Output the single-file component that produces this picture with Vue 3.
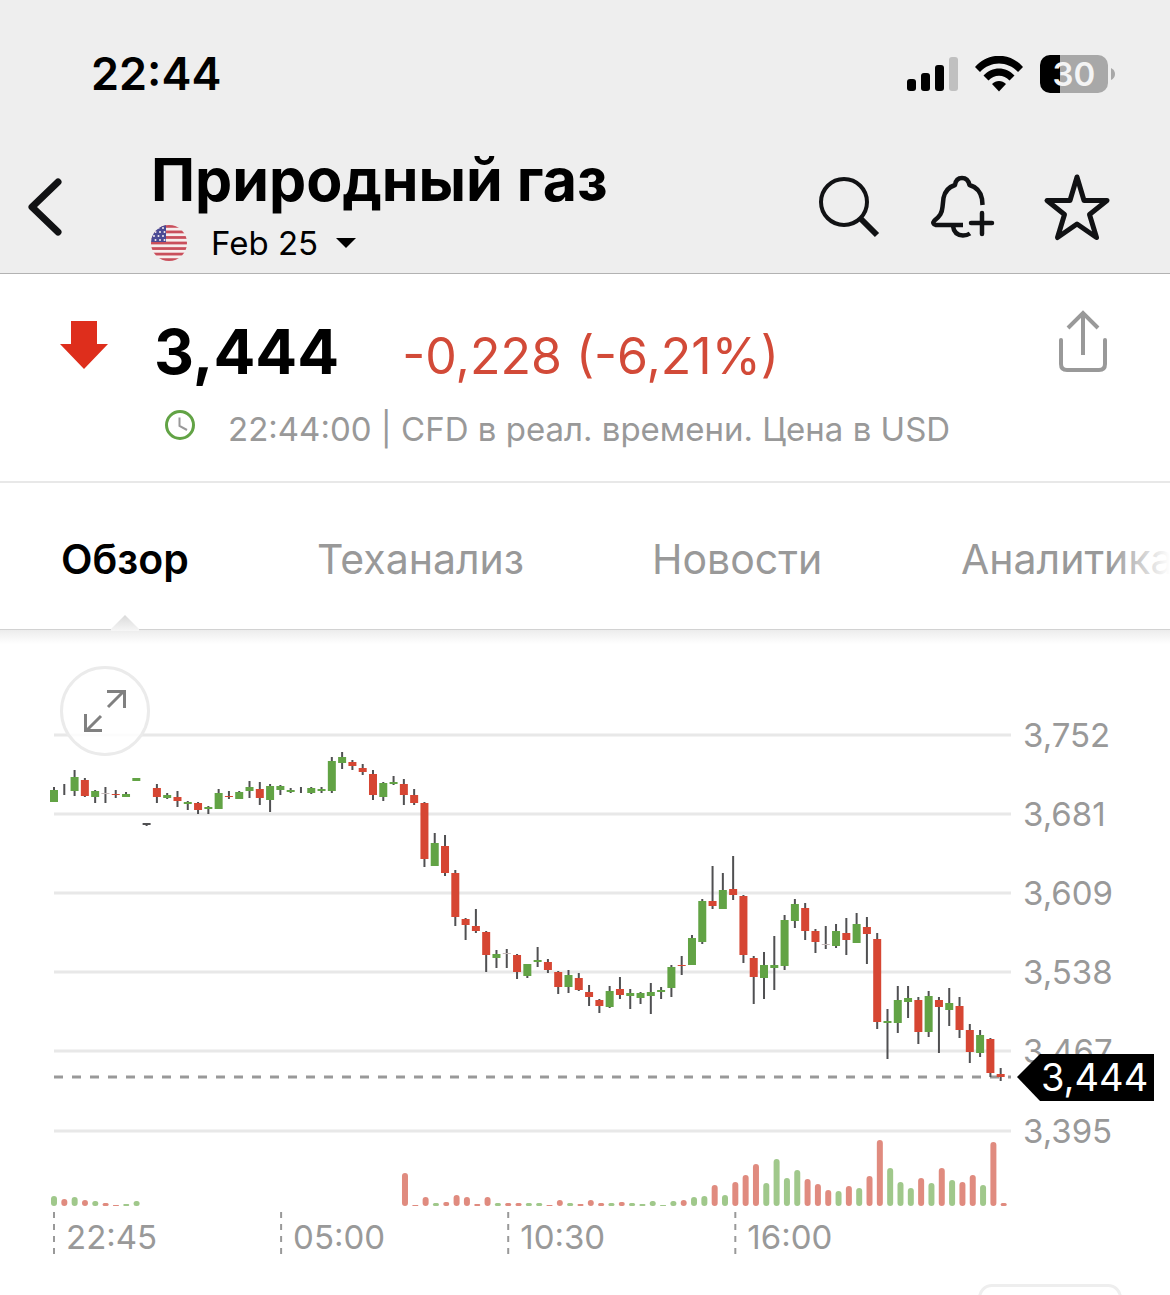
<script setup>
import { ref, computed } from 'vue';

const tabs = ['Обзор', 'Теханализ', 'Новости', 'Аналитика'];
const activeTab = ref('Обзор');

const LEFT = 54;
const RIGHT = 1011;
const CANDLE_STEP = 10.29;
const VOLUME_STEP = 10.323;
const VOLUME_BASE = 1206;

const levels = [
  { y: 735, label: '3,752' },
  { y: 814, label: '3,681' },
  { y: 893, label: '3,609' },
  { y: 972, label: '3,538' },
  { y: 1051, label: '3,467' },
  { y: 1131, label: '3,395' },
];

const times = [
  { i: 0, label: '22:45' },
  { i: 22, label: '05:00' },
  { i: 44, label: '10:30' },
  { i: 66, label: '16:00' },
];

// high, body top, body bottom, low, kind (u = up, d = down, n = flat, f = flat and faint)
const candleData = [
  [787, 790, 802, 802, 'u'], [784, 784, 784, 795, 'n'], [770, 777, 791, 796, 'u'], [778, 780, 796, 797, 'd'],
  [790, 791, 797, 803, 'u'], [787, 793, 794, 803, 'f'], [790, 794, 795, 798, 'd'], [792, 794, 797, 797, 'u'],
  [778, 778, 781, 781, 'u'], [823, 823, 825, 826, 'n'], [784, 788, 797, 803, 'd'], [793, 795, 798, 799, 'u'],
  [791, 797, 801, 807, 'd'], [801, 802, 804, 810, 'u'], [802, 803, 810, 814, 'd'], [806, 807, 809, 814, 'u'],
  [789, 793, 809, 809, 'u'], [791, 796, 797, 799, 'd'], [791, 792, 799, 799, 'u'], [781, 787, 791, 798, 'u'],
  [782, 789, 798, 805, 'd'], [784, 786, 800, 812, 'u'], [785, 786, 790, 795, 'u'], [788, 790, 792, 793, 'u'],
  [787, 787, 787, 793, 'n'], [787, 788, 793, 794, 'u'], [787, 789, 791, 793, 'u'], [757, 761, 791, 793, 'u'],
  [752, 757, 763, 769, 'u'], [760, 762, 766, 770, 'd'], [764, 768, 772, 775, 'd'], [770, 774, 795, 800, 'd'],
  [782, 783, 797, 801, 'u'], [776, 782, 784, 785, 'u'], [779, 784, 795, 805, 'd'], [789, 795, 803, 805, 'd'],
  [802, 803, 859, 867, 'd'], [833, 843, 866, 866, 'u'], [835, 846, 873, 876, 'd'], [870, 873, 917, 926, 'd'],
  [918, 919, 925, 940, 'd'], [909, 926, 931, 933, 'd'], [931, 932, 955, 972, 'd'], [950, 954, 958, 968, 'u'],
  [949, 953, 954, 968, 'f'], [954, 955, 972, 979, 'd'], [964, 964, 976, 978, 'u'], [947, 960, 962, 967, 'u'],
  [959, 962, 970, 973, 'd'], [971, 972, 987, 994, 'd'], [970, 975, 987, 993, 'u'], [973, 978, 990, 991, 'd'],
  [985, 992, 997, 1006, 'd'], [999, 1000, 1006, 1013, 'd'], [986, 991, 1007, 1008, 'u'], [977, 989, 995, 999, 'd'],
  [989, 993, 996, 1009, 'u'], [992, 993, 998, 1004, 'u'], [983, 992, 996, 1014, 'u'], [987, 990, 992, 999, 'u'],
  [965, 967, 988, 997, 'u'], [956, 965, 966, 975, 'd'], [935, 938, 965, 965, 'u'], [899, 901, 942, 944, 'u'],
  [866, 901, 906, 909, 'd'], [873, 890, 909, 909, 'u'], [856, 889, 895, 900, 'd'], [895, 896, 955, 963, 'd'],
  [956, 958, 977, 1004, 'd'], [952, 965, 978, 999, 'u'], [936, 965, 968, 990, 'u'], [915, 920, 966, 970, 'u'],
  [899, 904, 921, 928, 'u'], [903, 908, 931, 940, 'd'], [929, 931, 942, 953, 'd'], [926, 944, 945, 949, 'f'],
  [924, 931, 946, 948, 'u'], [918, 933, 940, 955, 'd'], [913, 924, 943, 943, 'u'], [917, 927, 934, 964, 'd'],
  [933, 939, 1022, 1029, 'd'], [1009, 1021, 1023, 1059, 'u'], [986, 1000, 1023, 1033, 'u'], [986, 998, 1002, 1018, 'u'],
  [997, 1000, 1032, 1044, 'd'], [991, 996, 1032, 1037, 'u'], [997, 1000, 1007, 1053, 'd'], [988, 1003, 1010, 1026, 'u'],
  [997, 1006, 1030, 1038, 'd'], [1024, 1030, 1052, 1063, 'd'], [1030, 1035, 1053, 1057, 'u'], [1038, 1039, 1073, 1077, 'd'],
  [1068, 1074, 1077, 1081, 'd'],
];

// first index of the run, then signed heights: positive = up, negative = down
const volumeRuns = [
  [0, [10, -7, 9, -6, 5, -3, -1, 2, 5]],
  [34, [-33, -1, -9, 3, -4, -11, -9, -2, -9, 3, -3, -3, 3, 3, -1, -6, 3, -2, -6, -3, 3, -4, 3, 2, 5, 1, 5,
    -6, 9, 10, -21, 11, -24, -31, -42, 23, 47, 28, 36, -27, -22, -16, 15, -20, 18, -30, -66, 38, 24, 18,
    -28, 23, -38, 26, -24, -31, 21, -64, -3]],
];

const candles = computed(() => candleData.map(([high, top, bottom, low, kind], i) => ({
  x: LEFT + i * CANDLE_STEP, high, top, bottom, low, kind,
})));

const volumes = computed(() => volumeRuns.flatMap(([start, values]) => values.map((v, k) => ({
  x: LEFT + (start + k) * VOLUME_STEP,
  h: Math.abs(v),
  kind: v > 0 ? 'u' : 'd',
}))));

const STRIPES = [0, 2, 4, 6, 8, 10, 12];
</script>

<template>
  <div class="screen">
    <header class="top">
      <div class="status">
        <span class="clock">22:44</span>
        <div class="status-icons">
          <svg width="51" height="36" viewBox="0 0 51 36" aria-hidden="true">
            <rect x="0" y="23" width="9" height="12" rx="3" />
            <rect x="14" y="17" width="9" height="18" rx="3" />
            <rect x="28" y="9" width="9" height="26" rx="3" />
            <rect x="42" y="1" width="9" height="34" rx="3" fill="#c0c0c0" />
          </svg>
          <svg width="48" height="36" viewBox="0 0 48 36" aria-hidden="true">
            <path d="M0 11 C13 -4 35 -4 48 11 L43 16 C32.5 4.5 15.5 4.5 5 16 Z" />
            <path d="M8.5 19.5 C17 10 31 10 39.5 19.5 L34.5 24.5 C29 18 19 18 13.5 24.5 Z" />
            <path d="M17 28 C21 24 27 24 31 28 L24 35.5 Z" />
          </svg>
          <div class="battery">
            <div class="battery-body">30</div>
            <svg width="4" height="12" viewBox="0 0 4 12" aria-hidden="true"><path d="M0 0 Q4 2 4 6 Q4 10 0 12 Z" fill="#a8a8a8" /></svg>
          </div>
        </div>
      </div>

      <div class="nav">
        <button class="icon-btn back" type="button" aria-label="Назад">
          <svg width="34" height="58" viewBox="0 0 34 58"><path d="M30 4 L4 29 L30 54" fill="none" stroke="#111214" stroke-width="7" stroke-linecap="round" stroke-linejoin="round" /></svg>
        </button>
        <div class="heading">
          <h1>Природный газ</h1>
          <button class="contract" type="button">
            <svg class="flag" width="36" height="36" viewBox="0 0 36 36" aria-hidden="true">
              <defs><clipPath id="flagClip"><circle cx="18" cy="18" r="18" /></clipPath></defs>
              <g clip-path="url(#flagClip)">
                <rect width="36" height="36" fill="#f6eeee" />
                <rect v-for="s in STRIPES" :key="s" x="0" :y="s * 2.77" width="36" height="2.77" fill="#c94f5c" />
                <rect width="15" height="17" fill="#4a4a94" />
                <g fill="#f6eeee">
                  <circle v-for="n in 12" :key="n" :cx="3 + ((n - 1) % 3) * 4.5 + (Math.floor((n - 1) / 3) % 2) * 1.5" :cy="3 + Math.floor((n - 1) / 3) * 4" r="1" />
                </g>
              </g>
            </svg>
            <span>Feb 25</span>
            <svg width="20" height="10" viewBox="0 0 20 10" aria-hidden="true"><path d="M0 0 H20 L10 10 Z" /></svg>
          </button>
        </div>
        <div class="actions">
          <button class="icon-btn" type="button" aria-label="Поиск">
            <svg width="66" height="66" viewBox="0 0 66 66" fill="none" stroke="#111214">
              <circle cx="29" cy="28" r="23" stroke-width="4" />
              <path d="M45 44 L62 61" stroke-width="6" />
            </svg>
          </button>
          <button class="icon-btn" type="button" aria-label="Создать уведомление">
            <svg width="66" height="66" viewBox="0 0 66 66" fill="none" stroke="#111214" stroke-width="4.5" stroke-linejoin="round">
              <path d="M34 51 H7 Q2.5 50 5.500 46.500 C11 42 13 39 13.500 33 L14.500 24 Q16.500 14 26 11 Q27 4 33 4 Q39 4 40.500 11 Q51 14 53 25 L53.500 31" />
              <path d="M24 52 Q25 61 34 61.500 Q38 61.500 41 59.500" />
              <path d="M53 39 V60 M42 49 H63" stroke-linecap="round" />
            </svg>
          </button>
          <button class="icon-btn" type="button" aria-label="В избранное">
            <svg width="68" height="68" viewBox="0 0 68 68" fill="none" stroke="#111214" stroke-width="5" stroke-linejoin="round">
              <path d="M34 4 L41 27.5 H64 L46.5 41.5 L53.5 64.5 L34 51 L14.5 64.5 L21.5 41.5 L4 27.5 H27 Z" />
            </svg>
          </button>
        </div>
      </div>
    </header>

    <section class="quote">
      <svg class="down" width="48" height="48" viewBox="0 0 48 48" aria-hidden="true"><path d="M11 0 H37 V23 H48 L24 48 L0 23 H11 Z" fill="#de2e1c" /></svg>
      <div class="quote-main">
        <div class="price-row">
          <span class="price">3,444</span>
          <span class="change">-0,228 (-6,21%)</span>
        </div>
        <div class="meta">
          <svg width="30" height="30" viewBox="0 0 30 30" fill="none" aria-hidden="true">
            <circle cx="15" cy="15" r="13.5" stroke="#62a345" stroke-width="3" />
            <path d="M14.5 7.5 V16 L22 20" stroke="#999" stroke-width="2" />
          </svg>
          <span>22:44:00 | CFD в реал. времени. Цена в USD</span>
        </div>
      </div>
      <button class="icon-btn share" type="button" aria-label="Поделиться">
        <svg width="50" height="64" viewBox="0 0 50 64" fill="none" stroke="#999" stroke-width="4">
          <path d="M3 30 V54 Q3 60 9 60 H41 Q47 60 47 54 V30" stroke-linecap="round" />
          <path d="M25 45 V4 M10 18 L25 3 L40 18" />
        </svg>
      </button>
    </section>

    <nav class="tabs">
      <button
        v-for="tab in tabs"
        :key="tab"
        type="button"
        class="tab"
        :class="{ active: tab === activeTab }"
        @click="activeTab = tab"
      >
        {{ tab }}
        <svg v-if="tab === activeTab" class="pointer" width="28" height="16" viewBox="0 0 28 16" aria-hidden="true">
          <defs>
            <linearGradient id="pointerFill" x1="0" y1="0" x2="0" y2="1">
              <stop offset="0" stop-color="#dadada" />
              <stop offset="1" stop-color="#f6f6f6" />
            </linearGradient>
          </defs>
          <path d="M0 14 L14 0 L28 14 V16 H0 Z" fill="url(#pointerFill)" />
        </svg>
      </button>
    </nav>

    <section class="chart">
      <button class="expand" type="button" aria-label="Развернуть график">
        <svg width="44" height="44" viewBox="0 0 44 44" fill="none" stroke="#808080" stroke-width="3">
          <path d="M25 18 L41 2 M24 2.5 H41.5 V19" />
          <path d="M18 27 L3 42 M2.5 25 V41.5 H19" />
        </svg>
      </button>
      <svg class="plot" viewBox="0 632 1170 632">
        <g class="grid">
          <line v-for="l in levels" :key="l.y" :x1="LEFT" :x2="RIGHT" :y1="l.y" :y2="l.y" />
        </g>
        <line class="last-line" :x1="LEFT" :x2="RIGHT" y1="1077" y2="1077" />
        <g v-for="(c, i) in candles" :key="i" :class="c.kind">
          <rect class="wick" :x="c.x - 1" :y="c.high" width="2" :height="c.low - c.high" />
          <rect class="body" :x="c.x - 4" :y="c.top" width="8" :height="c.bottom - c.top" />
        </g>
        <g class="volume">
          <rect
            v-for="v in volumes"
            :key="v.x"
            :class="v.kind"
            :x="v.x - 3"
            :y="VOLUME_BASE - v.h"
            width="6"
            :height="v.h"
            :rx="Math.min(3, v.h / 2)"
          />
        </g>
        <g class="axis">
          <text v-for="l in levels" :key="l.label" x="1023" :y="l.y + 12">{{ l.label }}</text>
          <template v-for="t in times" :key="t.label">
            <line :x1="LEFT + t.i * VOLUME_STEP" :x2="LEFT + t.i * VOLUME_STEP" y1="1212" y2="1254" />
            <text :x="LEFT + t.i * VOLUME_STEP + 12" y="1249">{{ t.label }}</text>
          </template>
        </g>
        <path d="M1017 1077 L1040 1054 H1154 V1101 H1040 Z" />
        <text class="tag-text" x="1041" y="1091">3,444</text>
      </svg>
    </section>

    <div class="bottom"><div class="card"></div></div>
  </div>
</template>

<style>
body {
  margin: 0;
  background: #fff;
}
</style>

<style scoped>
.screen {
  height: 100vh;
  overflow: hidden;
  display: flex;
  flex-direction: column;
  font-family: Inter, 'Liberation Sans', sans-serif;
  color: #000;
  background: #fff;
}
.screen > * {
  flex-shrink: 0;
}
button {
  font: inherit;
  color: inherit;
  background: none;
  border: 0;
  padding: 0;
  margin: 0;
  cursor: pointer;
}
svg {
  display: block;
}
.top {
  background: #eee;
  border-bottom: 1px solid #b2b2b2;
}
.status {
  display: flex;
  justify-content: space-between;
  align-items: center;
  padding: 46px 55px 0 91px;
}
.clock {
  font-size: 45px;
  line-height: 56px;
  font-weight: 600;
}
.status-icons {
  display: flex;
  align-items: center;
  gap: 17px;
}
.battery {
  display: flex;
  align-items: center;
  gap: 3px;
}
.battery-body {
  width: 68px;
  height: 38px;
  border-radius: 10px;
  background: linear-gradient(90deg, #000 20px, #a8a8a8 20px);
  color: #f4f4f4;
  font-size: 33px;
  line-height: 38px;
  font-weight: 600;
  text-align: center;
}
.nav {
  display: flex;
  padding: 48px 59px 10px 28px;
}
.icon-btn {
  display: flex;
}
.back {
  width: 123px;
  padding-top: 28px;
  align-items: flex-start;
}
.heading {
  flex: 1;
}
h1 {
  margin: 0;
  font-size: 59px;
  line-height: 60px;
  font-weight: 700;
  white-space: nowrap;
}
.contract {
  display: flex;
  align-items: center;
  font-size: 33px;
  line-height: 40px;
  padding-top: 13px;
}
.contract span {
  margin: 0 18px 0 24px;
}
.actions {
  display: flex;
  align-items: center;
  gap: 48px;
}
.quote {
  display: flex;
  align-items: flex-start;
  padding: 36px 62px 33px 60px;
  border-bottom: 2px solid #e8e8e8;
}
.down {
  margin-top: 11px;
}
.quote-main {
  flex: 1;
  padding-left: 46px;
}
.price-row {
  display: flex;
  align-items: baseline;
  gap: 63px;
  line-height: 84px;
}
.price {
  font-size: 62px;
  font-weight: 700;
}
.change {
  font-size: 50px;
  color: #d24a38;
}
.meta {
  display: flex;
  align-items: flex-start;
  gap: 33px;
  padding-left: 11px;
  margin-top: 12px;
  font-size: 33px;
  line-height: 38px;
  color: #999;
}
.tabs {
  position: relative;
  z-index: 1;
  display: grid;
  grid-template-columns: 256px 335px 309px auto;
  justify-items: start;
  height: 146px;
  padding-left: 61px;
  background: #fff;
  border-bottom: 1px solid #d2d2d2;
}
.tabs::after {
  content: '';
  position: absolute;
  top: 0;
  right: 0;
  bottom: 0;
  width: 60px;
  background: linear-gradient(90deg, rgba(255, 255, 255, 0), #fff);
}
.tab {
  position: relative;
  font-size: 41px;
  line-height: 52px;
  color: #999;
  padding-top: 6px;
}
.tab.active {
  color: #000;
  font-weight: 600;
}
.pointer {
  position: absolute;
  left: 50%;
  bottom: -2px;
  margin-left: -14px;
}
.chart {
  position: relative;
  padding-top: 2px;
  background: linear-gradient(#ececec, #fff 14px);
}
.expand {
  position: absolute;
  top: 36px;
  left: 60px;
  width: 90px;
  height: 90px;
  display: flex;
  align-items: center;
  justify-content: center;
  border: 3px solid #ebebeb;
  border-radius: 50%;
  background: rgba(255, 255, 255, 0.85);
}
.plot {
  width: 100%;
}
.grid line {
  stroke: #e8e8e8;
  stroke-width: 3;
}
.last-line {
  stroke: #999;
  stroke-width: 3;
  stroke-dasharray: 9 9;
}
.wick,
.body {
  fill: #505052;
}
.u .body {
  fill: #62a345;
}
.d .body {
  fill: #d64633;
}
.f .body {
  fill: #c4b8b8;
}
.volume .u {
  fill: #a0c88b;
}
.volume .d {
  fill: #e08b7f;
}
.axis text {
  font-size: 33px;
  fill: #999;
}
.axis line {
  stroke: #999;
  stroke-width: 2;
  stroke-dasharray: 6 6;
}
.tag-text {
  font-size: 38px;
  fill: #fff;
}
.bottom {
  display: flex;
  justify-content: flex-end;
  padding: 20px 48px 0;
}
.card {
  width: 138px;
  height: 60px;
  border: 3px solid #eee;
  border-radius: 14px;
}
</style>
